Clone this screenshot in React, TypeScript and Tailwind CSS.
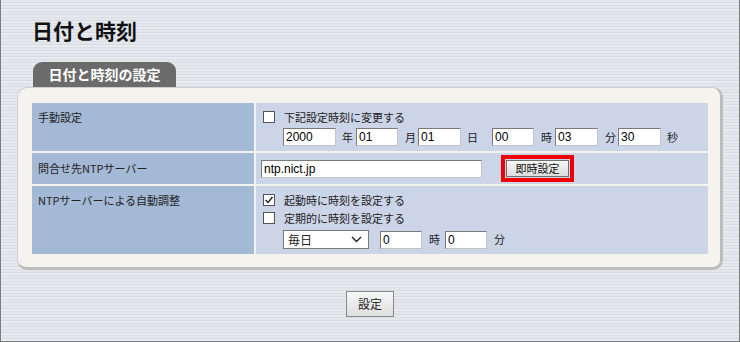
import React from 'react'

const jp = 'font-["Noto_Sans_CJK_JP","Liberation_Sans",sans-serif]'

function Box({ checked }: { checked?: boolean }) {
  return (
    <span className="flex h-[12px] w-[12px] items-center justify-center border border-[#555] bg-white">
      {checked && (
        <svg width="10" height="10" viewBox="0 0 10 10">
          <path d="M1.5 5 L4 7.5 L8.5 2" fill="none" stroke="#222" strokeWidth="1.4" />
        </svg>
      )}
    </span>
  )
}

function Field({ value, w }: { value: string; w: string }) {
  return (
    <span
      className={`flex h-[18px] items-center border border-t-[#7a7a7a] border-l-[#7a7a7a] border-r-[#c4c4c4] border-b-[#c4c4c4] bg-white pl-[2px] text-[12px] font-["Liberation_Sans",sans-serif] text-black ${w}`}
    >
      {value}
    </span>
  )
}

export default function App() {
  return (
    <div
      className={`h-[342px] w-[740px] overflow-hidden border-x border-b border-[#7c7c7c] bg-[repeating-linear-gradient(180deg,#e3e6eb_0px,#e3e6eb_2px,#d6dae1_2px,#d6dae1_3px,#e8ebef_3px,#e8ebef_5px,#dbdfe5_5px,#dbdfe5_6px)] ${jp} text-[11px] text-[#222]`}
    >
      <h1 className="pl-[31px] pt-[16px] text-[21px] font-bold leading-[28px] text-[#111]">日付と時刻</h1>

      <div className="ml-[32px] mt-[18px] flex h-[25px] w-[143px] items-center justify-center rounded-t-[9px] bg-[#6b6b6b] text-[14px] font-bold text-white">
        日付と時刻の設定
      </div>

      <div className="mx-[16px] h-[183px] rounded-[10px] border border-[#cfcfcf] border-r-[3px] border-b-[3px] border-r-[#bdbdbd] border-b-[#bdbdbd] bg-[#f4f3ed] pl-[14px] pr-[12px] pt-[15px]">
        <div className="grid grid-cols-[222px_1fr] grid-rows-[48px_31px_68px] gap-[2px]">
          <div className="bg-[#a3b9d6] pl-[6px] pt-[6px] leading-[16px]">手動設定</div>
          <div className="bg-[#ccd4e8] pl-[7px] pt-[5px]">
            <div className="flex h-[18px] items-center">
              <Box />
              <span className="ml-[9px]">下記設定時刻に変更する</span>
            </div>
            <div className="mt-[2px] flex items-center pl-[20px]">
              <Field value="2000" w="w-[53px]" />
              <span className="ml-[6px] mr-[3px]">年</span>
              <Field value="01" w="w-[42px]" />
              <span className="ml-[7px] mr-[2px]">月</span>
              <Field value="01" w="w-[43px]" />
              <span className="ml-[6px] mr-[14px]">日</span>
              <Field value="00" w="w-[42px]" />
              <span className="ml-[7px] mr-[3px]">時</span>
              <Field value="03" w="w-[43px]" />
              <span className="ml-[7px] mr-[2px]">分</span>
              <Field value="30" w="w-[43px]" />
              <span className="ml-[6px]">秒</span>
            </div>
          </div>

          <div className="bg-[#a3b9d6] pl-[6px] pt-[7px] leading-[16px]">問合せ先NTPサーバー</div>
          <div className="flex items-center bg-[#ccd4e8] pl-[5px]">
            <Field value="ntp.nict.jp" w="w-[221px]" />
            <div className="ml-[19px] border-[4px] border-[#ee0000] p-[1px]">
              <button className="flex h-[17px] w-[63px] items-center justify-center border border-[#707070] bg-[linear-gradient(#f6f6f6,#dcdcdc)] text-[11px] text-[#111]">
                即時設定
              </button>
            </div>
          </div>

          <div className="bg-[#a3b9d6] pl-[6px] pt-[6px] leading-[16px]">NTPサーバーによる自動調整</div>
          <div className="bg-[#ccd4e8] pl-[7px] pt-[5px]">
            <div className="flex h-[18px] items-center">
              <Box checked />
              <span className="ml-[9px]">起動時に時刻を設定する</span>
            </div>
            <div className="flex h-[18px] items-center">
              <Box />
              <span className="ml-[9px]">定期的に時刻を設定する</span>
            </div>
            <div className="mt-[3px] flex items-center pl-[20px]">
              <span className="flex h-[19px] w-[86px] items-center justify-between border border-[#7a7a7a] bg-white pl-[4px] pr-[6px] text-[12px]">
                毎日
                <svg width="11" height="7" viewBox="0 0 11 7">
                  <path d="M1 1 L5.5 5.5 L10 1" fill="none" stroke="#222" strokeWidth="1.4" />
                </svg>
              </span>
              <span className="ml-[11px]">
                <Field value="0" w="w-[42px]" />
              </span>
              <span className="ml-[7px] mr-[5px]">時</span>
              <Field value="0" w="w-[42px]" />
              <span className="ml-[7px]">分</span>
            </div>
          </div>
        </div>
      </div>

      <div className="mt-[21px] flex justify-center">
        <button className="flex h-[26px] w-[48px] items-center justify-center border border-[#8a8a8a] bg-[linear-gradient(#f8f8f8,#dedede)] text-[12px] text-[#222]">
          設定
        </button>
      </div>
    </div>
  )
}
